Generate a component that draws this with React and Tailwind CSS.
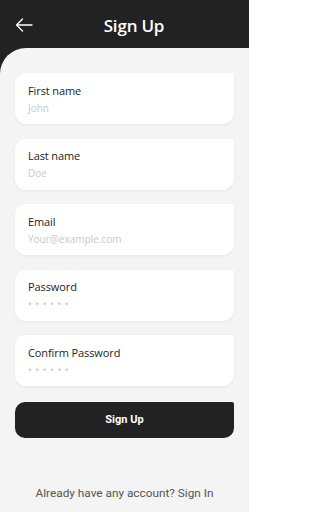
import React from "react";

const fields = [
  { label: "First name", ph: "John" },
  { label: "Last name", ph: "Doe" },
  { label: "Email", ph: "Your@example.com" },
  { label: "Password", ph: "\u2022 \u2022 \u2022 \u2022 \u2022 \u2022", pw: true },
  { label: "Confirm Password", ph: "\u2022 \u2022 \u2022 \u2022 \u2022 \u2022", pw: true },
];

export default function App() {
  return (
    <div className="w-[249px] h-[512px] bg-[#222222] flex flex-col overflow-hidden" style={{ fontFamily: "'Open Sans', 'Noto Sans', sans-serif" }}>
      <div className="h-[48px] shrink-0 relative flex items-center justify-center pl-[19px]">
        <svg className="absolute left-[15px] top-[18px]" width="18" height="14" viewBox="0 0 18 14" fill="none">
          <path d="M17 7H1.5M7.5 1L1.5 7L7.5 13" stroke="white" strokeWidth="1.3" strokeLinecap="round" strokeLinejoin="round" />
        </svg>
        <span className="text-white text-[17px] font-semibold tracking-[-0.2px] leading-none mt-[2px]">Sign Up</span>
      </div>
      <div className="flex-1 bg-[#f4f4f4] rounded-tl-[26px] px-[15px] pt-[25px] flex flex-col">
        <div className="flex flex-col gap-[14.5px]">
          {fields.map((f) => (
            <div
              key={f.label}
              className="h-[51px] bg-white rounded-l-[11px] rounded-br-[12px] rounded-tr-[2px] shadow-[0_1px_3px_rgba(0,0,0,0.06)] flex flex-col justify-center pl-[13px] pt-[1px]"
            >
              <div className="text-[11px] font-medium text-[#1c1c1c] leading-[14px] tracking-[-0.1px]">{f.label}</div>
              <div className={`text-[10px] text-[#c9c9c9] leading-[14px] mt-[3px] ${f.pw ? "tracking-[0.5px] text-[8px]" : ""}`}>{f.ph}</div>
            </div>
          ))}
        </div>
        <button
          className="mt-[16px] h-[36px] w-full bg-[#222222] rounded-l-[10px] rounded-br-[10px] rounded-tr-[2px] text-white text-[11px] font-bold flex items-center justify-center"
          style={{ fontFamily: "Roboto, 'Noto Sans', sans-serif" }}
        >
          Sign Up
        </button>
        <div className="flex-1" />
        <div
          className="text-center text-[11.8px] text-[#555555] mb-[11px] leading-[16px]"
          style={{ fontFamily: "Roboto, 'Noto Sans', sans-serif" }}
        >
          Already have any account? Sign In
        </div>
      </div>
    </div>
  );
}
